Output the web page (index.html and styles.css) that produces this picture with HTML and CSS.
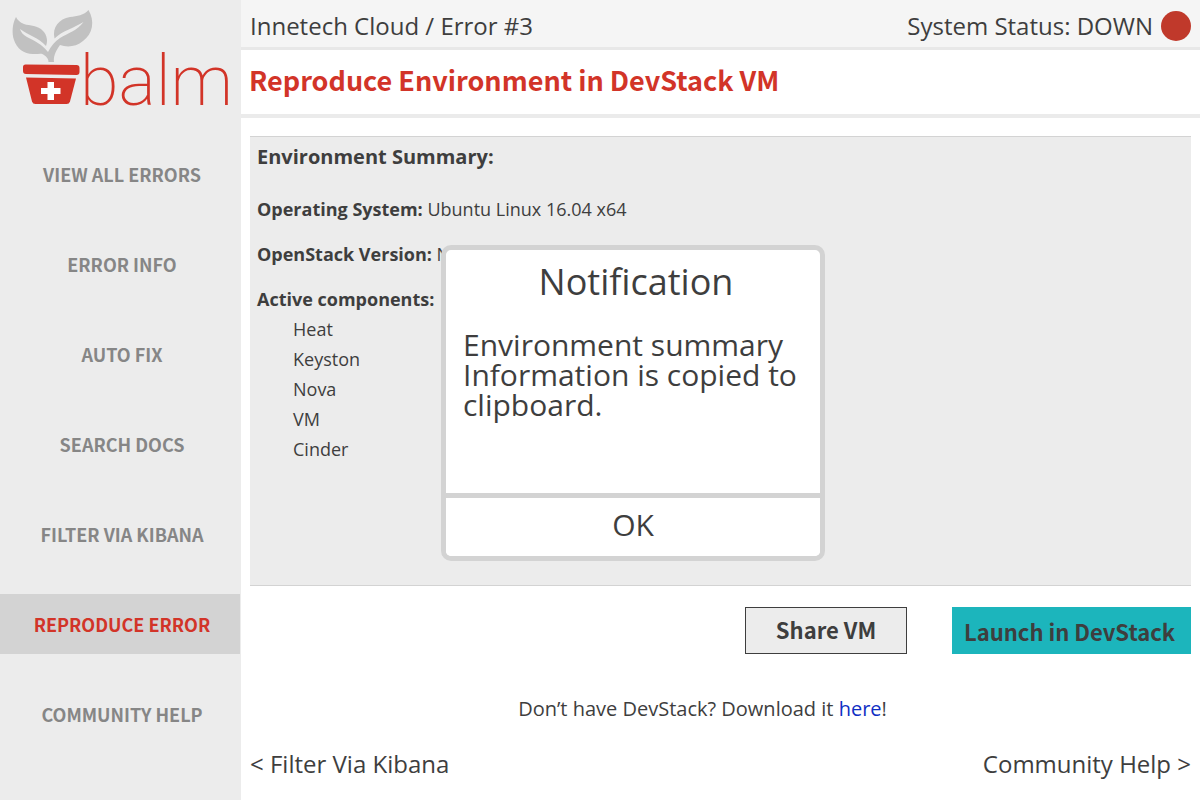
FILE: index.html
```html
<!DOCTYPE html>
<html lang="en">
<head>
<meta charset="utf-8">
<title>Balm - Reproduce Environment</title>
<link rel="stylesheet" href="styles.css">
</head>
<body>
<div class="app">
  <aside class="sidebar">
    <a class="logo" href="#" aria-label="balm home">
      <svg class="logo-mark" viewBox="0 0 80 110" width="80" height="110" aria-hidden="true">
        <g class="leaf">
          <path d="M16 17C12.500 23 11.500 33 14 40C17 49 25 55 35 54C39 54 42 53 44 55C47 57 48.500 59 48.500 62H54C53.500 57 54.500 53 60 45C67 47.500 76 47 83 41C93 34 95 21 88.500 10C84 15.500 77 16 70 17C59 19 52 27 54.500 38.500C62 31 74 28 83.500 22C77 31 68 33 60 38C55 41.500 51 46 48 52C42 44 33 40 27 37C23 35 21 32 20 29C29 36 38 37 46 46C48 41 47 35 43 31C38 25 30 26 24 24C20 22.500 17.500 20 16 17Z"/>
        </g>
        <g class="pot">
          <path d="M25.500 64.500L76.500 65Q79.500 65 79.500 68V72Q79.500 75 76.500 75L26 74Q23 74 23 71V67Q23 64.500 25.500 64.500Z"/>
          <path d="M26 77.500L76 78.500L70 101.500Q69.300 104 66.500 104H35.500Q32.700 104 32 101.500Z"/>
        </g>
        <path class="cross" d="M47.500 82H54V88H60.500V94H54V100H47.500V94H41V88H47.500Z"/>
      </svg>
      <span class="wordmark">balm</span>
    </a>
    <nav class="menu">
      <a href="#">VIEW ALL ERRORS</a>
      <a href="#">ERROR INFO</a>
      <a href="#">AUTO FIX</a>
      <a href="#">SEARCH DOCS</a>
      <a href="#">FILTER VIA KIBANA</a>
      <a class="active" href="#" aria-current="page">REPRODUCE ERROR</a>
      <a href="#">COMMUNITY HELP</a>
    </nav>
  </aside>
  <div class="page">
    <header class="topbar">
      <span>Innetech Cloud / Error #3</span>
      <span class="status">System Status: DOWN <i class="dot"></i></span>
    </header>
    <h1 class="title">Reproduce Environment in DevStack VM</h1>
    <main class="content">
      <section class="summary">
        <h2>Environment Summary:</h2>
        <p><b>Operating System:</b> Ubuntu Linux 16.04 x64</p>
        <p><b>OpenStack Version:</b> Newton</p>
        <p><b>Active components:</b></p>
        <ul>
          <li>Heat</li>
          <li>Keyston</li>
          <li>Nova</li>
          <li>VM</li>
          <li>Cinder</li>
        </ul>
        <div class="dialog" role="dialog" aria-labelledby="dialog-title">
          <div class="dialog-body">
            <h3 id="dialog-title">Notification</h3>
            <p>Environment summary Information is copied to clipboard.</p>
          </div>
          <button class="dialog-ok" type="button">OK</button>
        </div>
      </section>
      <div class="actions">
        <button class="share" type="button">Share VM</button>
        <button class="launch" type="button">Launch in DevStack</button>
      </div>
      <p class="download">Don’t have DevStack? Download it <a href="#">here</a>!</p>
      <footer class="pager">
        <a href="#">&lt; Filter Via Kibana</a>
        <a href="#">Community Help &gt;</a>
      </footer>
    </main>
  </div>
</div>
</body>
</html>
```
FILE: styles.css
```css
* { box-sizing: border-box; }

body {
  margin: 0;
  background: #fff;
  color: #3e3e3e;
  font: 18px/30px "Open Sans", sans-serif;
}

h1, h2, h3, p, ul { margin: 0; padding: 0; }
a { color: inherit; text-decoration: none; }
button { color: inherit; cursor: pointer; }

.app { display: flex; min-height: 100vh; }

.sidebar {
  flex: 0 0 241px;
  min-width: 0;
  border-right: 1px solid #ececec;
  background: #ececec;
}

.logo {
  display: flex;
  height: 144px;
  color: #d23428;
}

.logo-mark { flex: none; overflow: visible; }
.leaf { fill: #c1c1c1; }
.pot { fill: #d23428; }
.cross { fill: #fff; }

.wordmark {
  padding-top: 26px;
  font: 200 70px/110px Roboto, sans-serif;
}

.menu { display: grid; gap: 30px; }

.menu a {
  padding: 0 0 0 4px;
  color: #868686;
  font: bold 18px/60px "Noto Sans CJK SC", sans-serif;
  text-align: center;
}

.menu .active { background: #d3d3d3; color: #d23428; }

.page { flex: 1; min-width: 0; display: flex; flex-direction: column; }

.topbar {
  display: flex;
  justify-content: space-between;
  padding: 4px 9px 0;
  border-bottom: 3px solid #e8e8e8;
  background: #f5f5f5;
  font-size: 24px;
  line-height: 43px;
}

.status { display: flex; align-items: center; gap: 8px; }
.dot { width: 30px; height: 30px; border-radius: 50%; background: #c0392b; }

.title {
  padding: 0 8px 4px;
  border-bottom: 4px solid #ebebeb;
  color: #d23428;
  font: bold 27px/60px "Noto Sans CJK SC", sans-serif;
}

.content { padding: 18px 9px 0; }

.summary {
  position: relative;
  min-height: 450px;
  padding: 5px 7px;
  border: solid #d3d3d3;
  border-width: 1px 0;
  background: #ececec;
}

.summary h2 { margin-bottom: 22px; font-size: 20px; line-height: 30px; }
.summary > p + p { margin-top: 15px; }
.summary ul { padding-left: 36px; list-style: none; }

.dialog {
  position: absolute;
  top: 108px;
  left: 191px;
  width: 384px;
  overflow: hidden;
  border: 5px solid #d3d3d3;
  border-radius: 10px;
  background: #fff;
}

.dialog-body { min-height: 243px; padding: 12px 11px 12px 17px; }
.dialog h3 { margin-bottom: 28px; font-size: 36px; font-weight: 400; line-height: 40px; text-align: center; }
.dialog p { font-size: 30px; line-height: 30px; }

.dialog-ok {
  width: 100%;
  height: 63px;
  padding: 0 0 4px;
  border: 0;
  border-top: 5px solid #d3d3d3;
  background: #fff;
  font: 30px/50px "Open Sans", sans-serif;
}

.actions { display: flex; justify-content: flex-end; gap: 45px; margin-top: 21px; }

.actions button {
  height: 47px;
  font: bold 22px/40px "Noto Sans CJK SC", sans-serif;
}

.share { width: 162px; padding: 0 0 4px; border: 1px solid #3e3e3e; background: #ececec; }
.launch { width: 239px; padding: 0 4px 0 0; border: 0; background: #1cb5bc; }

.download { margin: 40px 36px 0 0; font-size: 20px; text-align: center; }
.download a { color: #0f2fc4; }

.pager {
  display: flex;
  justify-content: space-between;
  margin-top: 25px;
  font-size: 24px;
}
```
